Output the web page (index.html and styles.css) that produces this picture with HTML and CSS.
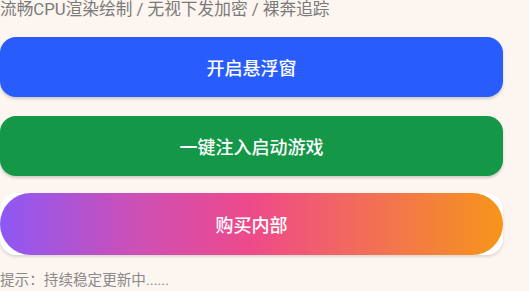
FILE: index.html
```html
<!DOCTYPE html>
<html lang="zh">
  <head>
    <meta charset="UTF-8" />
    <meta name="viewport" content="width=device-width, initial-scale=1.0" />
    <title>面板</title>
    <link rel="stylesheet" href="styles.css">
  </head>
  <body>
    <div class="panel">
      <p class="intro">流畅CPU渲染绘制 / 无视下发加密 / 裸奔追踪</p>
      <button class="btn btn-blue">开启悬浮窗</button>
      <button class="btn btn-green">一键注入启动游戏</button>
      <div class="btn-wrap">
        <button class="btn btn-gradient">购买内部</button>
      </div>
      <p class="tip">提示：持续稳定更新中......</p>
    </div>
  </body>
</html>
```

FILE: styles.css
```css
* {
  margin: 0;
  padding: 0;
  box-sizing: border-box;
}

html,
body {
  height: 100%;
  width: 100%;
}

body {
  background: #fcf5f0;
  font-family: Roboto, "Noto Sans CJK SC", sans-serif;
  overflow: hidden;
}

.panel {
  display: flex;
  flex-direction: column;
  width: 503px;
}

.intro {
  color: #7a7a7a;
  font-size: 16.7px;
  line-height: 20px;
  white-space: nowrap;
}

.btn {
  display: flex;
  align-items: center;
  justify-content: center;
  width: 100%;
  height: 60px;
  border: none;
  border-radius: 16px;
  color: white;
  font-family: inherit;
  font-size: 18px;
  font-weight: 500;
  box-shadow: 0 2px 3px rgba(0, 0, 0, 0.18);
}

.btn-blue {
  margin-top: 17px;
  background: #285cfd;
}

.btn-green {
  margin-top: 19px;
  background: #149847;
}

.btn-wrap {
  margin-top: 17px;
  background: white;
  border-radius: 16px;
  box-shadow: 0 2px 3px rgba(0, 0, 0, 0.12);
}

.btn-gradient {
  height: 62px;
  border-radius: 999px;
  box-shadow: none;
  background: linear-gradient(90deg, #8d58f4 0%, #cf4fb4 28%, #ee4a8a 50%, #f26c5a 72%, #f6951a 100%);
}

.tip {
  margin-top: 15px;
  color: #8a8a8a;
  font-size: 14.6px;
  line-height: 20px;
  white-space: nowrap;
}
```
